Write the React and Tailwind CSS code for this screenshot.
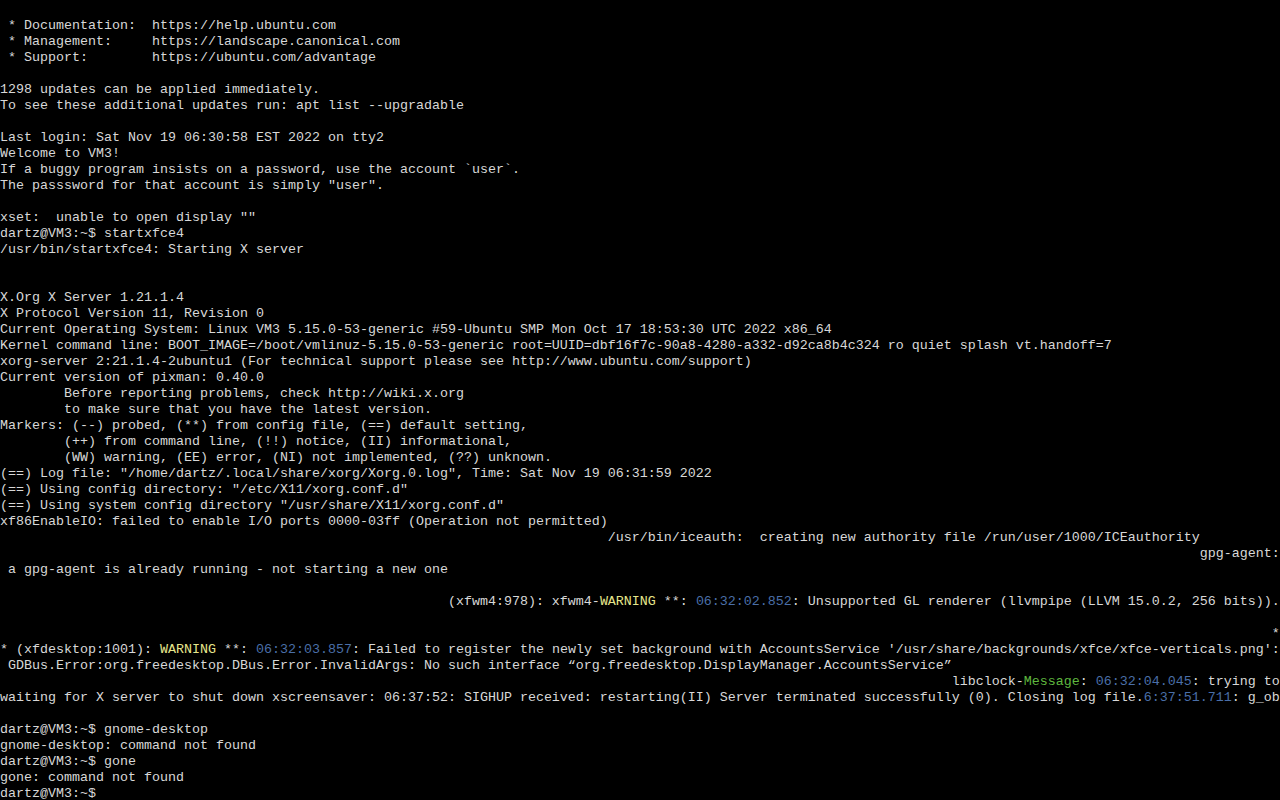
import React from 'react';

const Y = 'text-[#e6e68c]';
const B = 'text-[#4a6fa8]';
const G = 'text-[#5fb93f]';

const sp = (n) => ' '.repeat(n);

// each row is a list of [text, colorClass?]
const rows = [
  [],
  [[' * Documentation:  https://help.ubuntu.com']],
  [[' * Management:     https://landscape.canonical.com']],
  [[' * Support:        https://ubuntu.com/advantage']],
  [],
  [['1298 updates can be applied immediately.']],
  [['To see these additional updates run: apt list --upgradable']],
  [],
  [['Last login: Sat Nov 19 06:30:58 EST 2022 on tty2']],
  [['Welcome to VM3!']],
  [['If a buggy program insists on a password, use the account `user`.']],
  [['The passsword for that account is simply "user".']],
  [],
  [['xset:  unable to open display ""']],
  [['dartz@VM3:~$ startxfce4']],
  [['/usr/bin/startxfce4: Starting X server']],
  [],
  [],
  [['X.Org X Server 1.21.1.4']],
  [['X Protocol Version 11, Revision 0']],
  [['Current Operating System: Linux VM3 5.15.0-53-generic #59-Ubuntu SMP Mon Oct 17 18:53:30 UTC 2022 x86_64']],
  [['Kernel command line: BOOT_IMAGE=/boot/vmlinuz-5.15.0-53-generic root=UUID=dbf16f7c-90a8-4280-a332-d92ca8b4c324 ro quiet splash vt.handoff=7']],
  [['xorg-server 2:21.1.4-2ubuntu1 (For technical support please see http://www.ubuntu.com/support)']],
  [['Current version of pixman: 0.40.0']],
  [['        Before reporting problems, check http://wiki.x.org']],
  [['        to make sure that you have the latest version.']],
  [['Markers: (--) probed, (**) from config file, (==) default setting,']],
  [['        (++) from command line, (!!) notice, (II) informational,']],
  [['        (WW) warning, (EE) error, (NI) not implemented, (??) unknown.']],
  [['(==) Log file: "/home/dartz/.local/share/xorg/Xorg.0.log", Time: Sat Nov 19 06:31:59 2022']],
  [['(==) Using config directory: "/etc/X11/xorg.conf.d"']],
  [['(==) Using system config directory "/usr/share/X11/xorg.conf.d"']],
  [['xf86EnableIO: failed to enable I/O ports 0000-03ff (Operation not permitted)']],
  [[sp(76) + '/usr/bin/iceauth:  creating new authority file /run/user/1000/ICEauthority']],
  [[sp(150) + 'gpg-agent:']],
  [[' a gpg-agent is already running - not starting a new one']],
  [],
  [
    [sp(56) + '(xfwm4:978): xfwm4-'],
    ['WARNING', Y],
    [' **: '],
    ['06:32:02.852', B],
    [': Unsupported GL renderer (llvmpipe (LLVM 15.0.2, 256 bits)).'],
  ],
  [],
  [[sp(159) + '*']],
  [
    ['* (xfdesktop:1001): '],
    ['WARNING', Y],
    [' **: '],
    ['06:32:03.857', B],
    [": Failed to register the newly set background with AccountsService '/usr/share/backgrounds/xfce/xfce-verticals.png':"],
  ],
  [[' GDBus.Error:org.freedesktop.DBus.Error.InvalidArgs: No such interface \u201corg.freedesktop.DisplayManager.AccountsService\u201d']],
  [
    [sp(119) + 'libclock-'],
    ['Message', G],
    [': '],
    ['06:32:04.045', B],
    [': trying to'],
  ],
  [
    ['waiting for X server to shut down xscreensaver: 06:37:52: SIGHUP received: restarting(II) Server terminated successfully (0). Closing log file.'],
    ['6:37:51.711', B],
    [': g_ob'],
  ],
  [],
  [['dartz@VM3:~$ gnome-desktop']],
  [['gnome-desktop: command not found']],
  [['dartz@VM3:~$ gone']],
  [['gone: command not found']],
  [['dartz@VM3:~$ ']],
];

export default function App() {
  return (
    <div className="w-[1280px] h-[800px] bg-black overflow-hidden pt-[2px] text-[#d8d8d8] font-['Liberation_Mono',monospace] text-[13.33px] leading-[16px]">
      {rows.map((row, i) => (
        <div key={i} className="h-[16px] whitespace-pre overflow-hidden">
          {row.map(([text, color], j) => (
            <span key={j} className={color}>
              {text}
            </span>
          ))}
        </div>
      ))}
    </div>
  );
}
